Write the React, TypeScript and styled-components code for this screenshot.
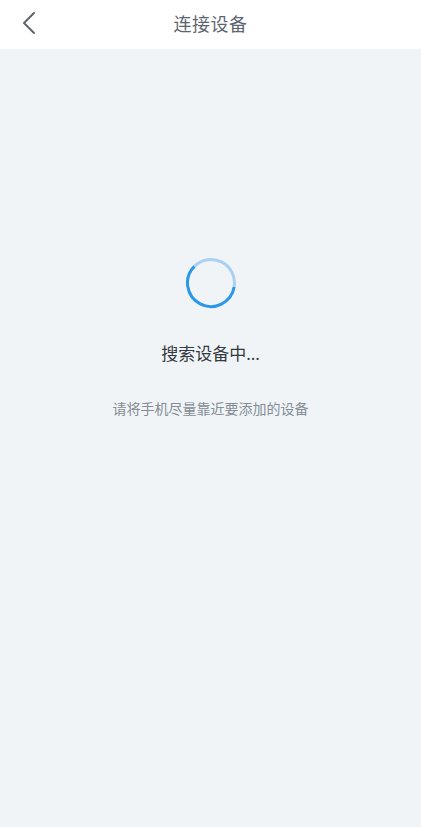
import React from 'react'
import styled, { createGlobalStyle } from 'styled-components'

const GlobalStyle = createGlobalStyle`
  html, body {
    margin: 0;
    padding: 0;
    background: #f0f4f7;
  }
  body {
    font-family: "Noto Sans", "Noto Sans CJK SC", sans-serif;
  }
`

const Page = styled.div`
  min-height: 827px;
  display: flex;
  flex-direction: column;
  background: #f0f4f7;
`

const NavBar = styled.header`
  height: 49px;
  background: #ffffff;
  display: flex;
  align-items: center;
  justify-content: center;
  position: relative;
`

const BackButton = styled.button`
  position: absolute;
  left: 14px;
  top: 8px;
  width: 30px;
  height: 30px;
  padding: 0;
  border: none;
  background: none;
  display: flex;
  align-items: center;
  justify-content: center;
`

const Title = styled.h1`
  margin: 0;
  font-size: 18px;
  font-weight: 400;
  color: #5d6670;
  letter-spacing: 0.5px;
  margin-top: -4px;
`

const Body = styled.main`
  display: flex;
  flex-direction: column;
  align-items: center;
  padding-top: 208px;
`

const Spinner = styled.svg`
  width: 52px;
  height: 52px;
  display: block;
`

const Status = styled.p`
  margin: 33px 0 0;
  font-size: 17px;
  color: #333a40;
  line-height: 24px;
`

const Hint = styled.p`
  margin: 33px 0 0;
  font-size: 14px;
  color: #848c94;
  line-height: 20px;
`

function arc(cx: number, cy: number, r: number, a0: number, a1: number) {
  const p = (a: number) => {
    const rad = ((a - 90) * Math.PI) / 180
    return [cx + r * Math.cos(rad), cy + r * Math.sin(rad)]
  }
  const [x0, y0] = p(a0)
  const [x1, y1] = p(a1)
  const large = (a1 - a0 + 360) % 360 > 180 ? 1 : 0
  return `M ${x0} ${y0} A ${r} ${r} 0 ${large} 1 ${x1} ${y1}`
}

export default function App() {
  return (
    <Page>
      <GlobalStyle />
      <NavBar>
        <BackButton aria-label="back">
          <svg width="16" height="24" viewBox="0 0 16 24">
            <path d="M13 2 L3 12 L13 22" fill="none" stroke="#5d6670" strokeWidth="2" strokeLinecap="round" strokeLinejoin="round" />
          </svg>
        </BackButton>
        <Title>连接设备</Title>
      </NavBar>
      <Body>
        <Spinner viewBox="0 0 52 52">
          <path d={arc(26, 26, 23.5, 315, 100)} fill="none" stroke="#a9d0f2" strokeWidth="3" />
          <path d={arc(26, 26, 23.5, 100, 315)} fill="none" stroke="#2a97ea" strokeWidth="3" />
        </Spinner>
        <Status>搜索设备中...</Status>
        <Hint>请将手机尽量靠近要添加的设备</Hint>
      </Body>
    </Page>
  )
}
